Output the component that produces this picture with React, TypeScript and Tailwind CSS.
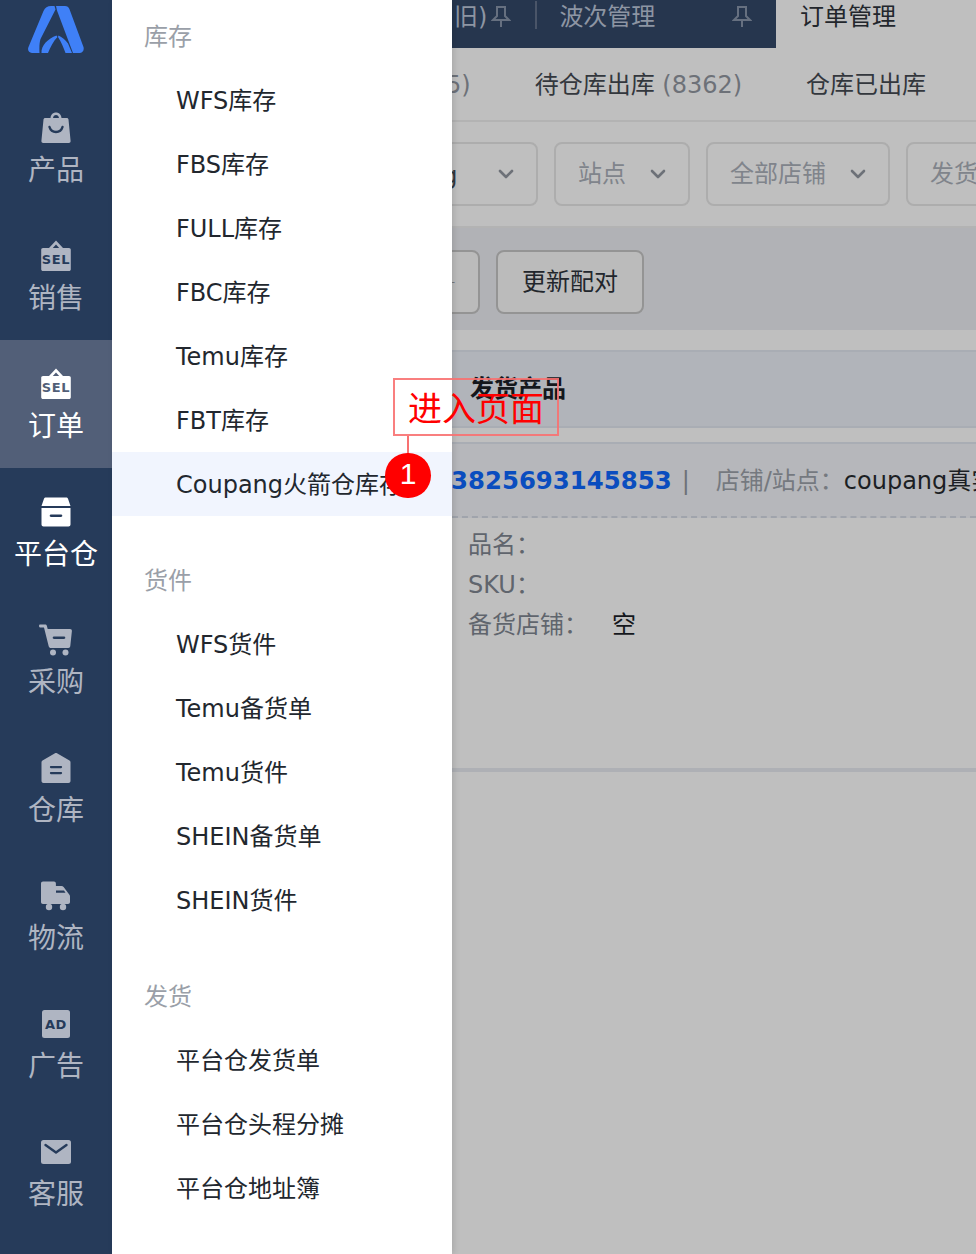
const Bag = () => (
  <svg viewBox="0 0 30 32" className="h-8 w-[30px]">
    <path fill="currentColor" fillRule="evenodd" d="M9.500 6C9.800 2.600 12 .5 15 .5s5.200 2.100 5.500 5.500h5.200c1 0 1.700.7 1.800 1.600L29.600 29c.1 1.300-.7 2-1.800 2H2.200C1.100 31 .3 30.300 .4 29L2.500 7.600C2.600 6.700 3.300 6 4.300 6zM12 6h6c-.3-1.900-1.400-3-3-3s-2.700 1.100-3 3z" />
    <path fill="none" stroke="#263b5a" strokeWidth="2.400" strokeLinecap="round" d="M8.500 15c1 3.500 3.500 5 6.500 5s5.500-1.500 6.500-5" />
  </svg>
)

const Sel = ({ bg }: { bg: string }) => (
  <svg viewBox="0 0 30 32" className="h-8 w-[30px]">
    <path fill="currentColor" fillRule="evenodd" d="M15 .5 22 8h6c1 0 1.800.8 1.800 1.800v19.400c0 1-.8 1.800-1.800 1.800H2c-1 0-1.800-.8-1.800-1.800V9.800C.2 8.800 1 8 2 8h6zM15 4.500 11.800 8h6.400z" />
    <text x="15" y="24" textAnchor="middle" fontSize="13" fontWeight="700" fontFamily="DejaVu Sans" letterSpacing=".7" fill={bg}>SEL</text>
  </svg>
)

const Box = () => (
  <svg viewBox="0 0 30 30" className="h-[30px] w-[30px]">
    <path fill="currentColor" fillRule="evenodd" d="M5 .5h20c1 0 1.700.5 2.100 1.400L29.500 9H.5L2.900 1.900C3.300 1 4 .500 5 .500zM.5 11h29v16.500c0 1.300-.9 2-2 2h-25c-1.100 0-2-.7-2-2zM10 17.500c-.8 0-1.300.6-1.300 1.300S9.200 20 10 20h10c.8 0 1.300-.5 1.300-1.200s-.5-1.300-1.300-1.300z" />
  </svg>
)

const Cart = () => (
  <svg viewBox="0 0 34 32" className="h-8 w-[34px]">
    <path fill="currentColor" fillRule="evenodd" d="M1 .5h5c1 0 1.600.5 1.900 1.400L8.700 5H31c1.300 0 2 .9 1.900 2l-1.600 15c-.1 1.200-.9 2-2 2H12c-1.200 0-2-.7-2.300-1.800L5 3.500H1.500C.6 3.500 0 2.800 0 2S.4.500 1 .5zM15 12.500c-.8 0-1.300.6-1.300 1.300S14.200 15 15 15h10c.8 0 1.300-.5 1.300-1.200s-.5-1.300-1.300-1.300z" />
    <circle cx="14" cy="28.500" r="3" fill="currentColor" />
    <circle cx="26.500" cy="28.500" r="3" fill="currentColor" />
  </svg>
)

const House = () => (
  <svg viewBox="0 0 30 32" className="h-8 w-[30px]">
    <path fill="currentColor" fillRule="evenodd" d="M14 1.200c.7-.4 1.400-.4 2 0l12.500 7.300c.7.400 1 1 1 1.800V29c0 1.300-.9 2-2 2h-25c-1.100 0-2-.7-2-2V10.300c0-.8.300-1.400 1-1.800zM10 14c-.7 0-1.100.5-1.100 1.100s.4 1.100 1.100 1.100h10c.7 0 1.100-.5 1.100-1.100S20.700 14 20 14zM10 20c-.7 0-1.100.5-1.100 1.100s.4 1.100 1.100 1.100h10c.7 0 1.100-.5 1.100-1.100S20.700 20 20 20z" />
  </svg>
)

const Truck = () => (
  <svg viewBox="0 0 30 30" className="h-[30px] w-[30px]">
    <path fill="currentColor" fillRule="evenodd" d="M2 .5h11c1.100 0 1.900.8 1.900 1.900V5h5.600c.9 0 1.600.4 2.100 1.100l6 8c.3.400.4.900.4 1.400V21c0 1.200-.8 2-2 2H2c-1.200 0-2-.8-2-2V2.500C0 1.300.8.500 2 .500zM15 9.500v2.200h9.500L23 9.500z" />
    <circle cx="8" cy="26" r="3.200" fill="currentColor" />
    <circle cx="22" cy="26" r="3.200" fill="currentColor" />
  </svg>
)

const Ad = () => (
  <svg viewBox="0 0 28 28" className="h-7 w-7">
    <rect width="28" height="28" rx="2.500" fill="currentColor" />
    <text x="14" y="19" textAnchor="middle" fontSize="13" fontWeight="700" fontFamily="DejaVu Sans" letterSpacing=".5" fill="#263b5a">AD</text>
  </svg>
)

const Mail = () => (
  <svg viewBox="0 0 30 24" className="h-6 w-[30px]">
    <rect width="30" height="24" rx="2.500" fill="currentColor" />
    <path d="M4.500 5 15 12.500 25.500 5" fill="none" stroke="#263b5a" strokeWidth="2.400" strokeLinecap="round" strokeLinejoin="round" />
  </svg>
)

const Pin = () => (
  <svg viewBox="0 0 20 24" className="h-6 w-5 text-[#667080]">
    <path d="M5 2h10M6 2v9l-4 4h16l-4-4V2M10 15v7" fill="none" stroke="currentColor" strokeWidth="2" />
  </svg>
)

const Chevron = () => (
  <svg viewBox="0 0 16 10" className="h-2.5 w-4 shrink-0 text-[#6d7178]">
    <path d="M2 2l6 6 6-6" fill="none" stroke="currentColor" strokeWidth="2.600" strokeLinecap="round" strokeLinejoin="round" />
  </svg>
)

const NavItems = [
  { label: '产品', icon: <Bag /> },
  { label: '销售', icon: <Sel bg="#263b5a" /> },
  { label: '订单', icon: <Sel bg="#525f78" />, hover: true },
  { label: '平台仓', icon: <Box />, on: true },
  { label: '采购', icon: <Cart /> },
  { label: '仓库', icon: <House /> },
  { label: '物流', icon: <Truck /> },
  { label: '广告', icon: <Ad /> },
  { label: '客服', icon: <Mail /> },
]

const MenuGroups = [
  {
    title: '库存',
    items: ['WFS库存', 'FBS库存', 'FULL库存', 'FBC库存', 'Temu库存', 'FBT库存', 'Coupang火箭仓库存'],
  },
  {
    title: '货件',
    items: ['WFS货件', 'Temu备货单', 'Temu货件', 'SHEIN备货单', 'SHEIN货件'],
  },
  {
    title: '发货',
    items: ['平台仓发货单', '平台仓头程分摊', '平台仓地址簿'],
  },
]

const App = () => {
  return (
    <div className="relative flex h-[1254px] w-[976px] overflow-hidden bg-[#bfbfbf] font-['DejaVu_Sans','Noto_Sans_CJK_SC',sans-serif]">
      <div id="Sidebar" className="flex w-28 shrink-0 flex-col bg-[#263b5a]">
        <div className="flex h-[84px] shrink-0 justify-center pt-[6px]">
          <svg viewBox="0 0 56 47" className="h-[47px] w-14">
            <path fill="#3f80f7" d="M23 0h3.500L27.500 3.500 12.500 33C11.500 36 11.200 41 11.500 47H4C.8 47-.8 44 .5 41L15.500 5C17 1.800 19.500 0 23 0z" />
            <path fill="#3f80f7" d="M28 0h9c2.200 0 3.600 1.200 4.400 3L55.300 40.500C56.700 44 54.500 47 51.500 47H45L29 4.500z" />
            <path fill="#3f80f7" d="M13.500 47C13 39.500 20 32.500 28.500 29.500L29.500 31C25.500 35 22.500 41 20 47z" />
            <path fill="#3f80f7" d="M30.500 29.500C34 31 37.500 34 40 37.500L44 47H37.500C35.500 41.500 33.500 36.500 30 31z" />
          </svg>
        </div>
        {NavItems.map((n) => (
          <div
            key={n.label}
            className={`flex h-32 shrink-0 flex-col items-center pt-7 ${n.hover ? 'bg-[#525f78] text-white' : n.on ? 'text-white' : 'text-[#afb5c2]'}`}
          >
            <div className="flex h-8 items-center justify-center">{n.icon}</div>
            <span className="mt-[7px] text-[28px] leading-10 whitespace-nowrap">{n.label}</span>
          </div>
        ))}
      </div>

      <div id="Menu" className="z-10 flex w-[340px] shrink-0 flex-col bg-white pt-[5px] shadow-[2px_0_6px_rgba(0,0,0,0.12)]">
        {MenuGroups.map((g) => (
          <div key={g.title} className="mb-8 flex flex-col">
            <div className="flex h-16 items-center pl-8 text-2xl text-[#9a9fa8]">{g.title}</div>
            {g.items.map((item) => (
              <div
                key={item}
                className={`flex h-16 items-center pl-16 text-2xl whitespace-nowrap text-[#22272e] ${item.startsWith('Coupang') ? '-mt-px mb-px bg-[#f1f5fe] pt-[2px]' : ''}`}
              >
                {item}
              </div>
            ))}
          </div>
        ))}
      </div>

      <div id="Main" className="flex min-w-0 flex-1 flex-col overflow-hidden">
        <div className="flex h-12 shrink-0 items-start text-2xl">
          <div className="flex h-12 w-[324px] shrink-0 items-start overflow-hidden bg-[#26364e] pt-[1px] text-[#8d95a3]">
            <span className="ml-[2px] shrink-0 leading-8 whitespace-nowrap">旧)</span>
            <span className="ml-1 mt-1"><Pin /></span>
            <span className="ml-6 h-7 w-[2px] bg-[#4a5568]" />
            <span className="ml-[22px] leading-8 whitespace-nowrap">波次管理</span>
            <span className="ml-[77px] mt-1"><Pin /></span>
          </div>
          <span className="ml-6 pt-[1px] leading-8 whitespace-nowrap text-[#22262c]">订单管理</span>
        </div>

        <div className="flex h-[74px] shrink-0 items-center border-b-2 border-[#b3b3b3] pt-[2px] text-2xl whitespace-nowrap text-[#33373d]">
          <span className="-ml-[6px] text-[#6d7178]">5)</span>
          <span className="ml-[64px]">待仓库出库 <span className="text-[#6d7178]">(8362)</span></span>
          <span className="ml-[64px]">仓库已出库</span>
        </div>

        <div className="flex h-[106px] shrink-0 items-center gap-4 border-b-2 border-[#b3b3b3] text-2xl whitespace-nowrap">
          <div className="-ml-4 flex h-16 w-[102px] shrink-0 items-center justify-between rounded-lg border-2 border-[#adadad] pr-[22px] text-[#33373d]">
            <span className="-ml-[84px] mt-1 shrink-0">coupang</span>
            <Chevron />
          </div>
          <div className="flex h-16 w-[136px] shrink-0 items-center justify-between rounded-lg border-2 border-[#adadad] px-[22px] text-[#80848b]">
            <span>站点</span>
            <Chevron />
          </div>
          <div className="flex h-16 w-[184px] shrink-0 items-center justify-between rounded-lg border-2 border-[#adadad] px-[22px] text-[#80848b]">
            <span>全部店铺</span>
            <Chevron />
          </div>
          <div className="flex h-16 w-[136px] shrink-0 items-center rounded-lg border-2 border-[#adadad] px-[22px] text-[#80848b]">
            <span>发货</span>
          </div>
        </div>

        <div className="flex h-[102px] shrink-0 items-center gap-4 bg-[#b1b2b6] pt-[6px] text-2xl whitespace-nowrap">
          <div className="-ml-4 flex h-16 w-11 shrink-0 items-center justify-end rounded-lg border-2 border-[#949494] bg-[#bbbbbb] pr-[23px] text-[#777]">
            <span className="text-xs">-</span>
          </div>
          <div className="flex h-16 w-[148px] shrink-0 items-center justify-center rounded-lg border-2 border-[#949494] bg-[#bbbbbb] text-[#22262c]">
            更新配对
          </div>
        </div>

        <div className="mt-5 flex h-[78px] shrink-0 items-center border-y-2 border-[#a9adb4] bg-[#b1b4ba] pl-[18px] text-2xl font-bold text-[#14171c]">
          发货产品
        </div>

        <div className="mt-[14px] flex h-[76px] shrink-0 items-center border-t-2 border-b-2 border-t-[#a9adb4] border-b-[#a0a4ac] bg-[#b6b7bb] pt-[2px] text-2xl whitespace-nowrap [border-bottom-style:dashed]">
          <span className="-ml-[1px] text-[24.4px] font-bold text-[#0a4dbf]">3825693145853</span>
          <span className="ml-[10px] text-[#6d7178]">|</span>
          <span className="ml-[26px] text-[#75797f]">店铺/站点：</span>
          <span className="text-[#1c1f24]">coupang真实</span>
        </div>

        <div className="flex h-[254px] shrink-0 flex-col border-b-4 border-[#aeb0b5] pt-[7px] pl-4 text-2xl leading-10 text-[#60656d]">
          <span>品名：</span>
          <span>SKU：</span>
          <div className="flex">
            <span className="w-[144px]">备货店铺：</span>
            <span className="text-[#14171c]">空</span>
          </div>
        </div>
      </div>

      <div id="Callout" className="absolute top-[378px] left-[393px] z-20 flex flex-col items-start">
        <div className="flex h-[58px] w-[166px] items-center justify-center border-2 border-[#f87171]/90 pt-1 text-[34px] leading-none whitespace-nowrap text-[#ff0000]">
          进入页面
        </div>
        <div className="ml-[14px] h-5 w-[2px] bg-[#f87171]" />
        <div className="-ml-2 -mt-[3px] flex h-[45px] w-[46px] items-center justify-center rounded-full bg-[#ff0000] pb-1 font-['Liberation_Sans',sans-serif] text-[30px] text-white">
          1
        </div>
      </div>
    </div>
  )
}

export default App
